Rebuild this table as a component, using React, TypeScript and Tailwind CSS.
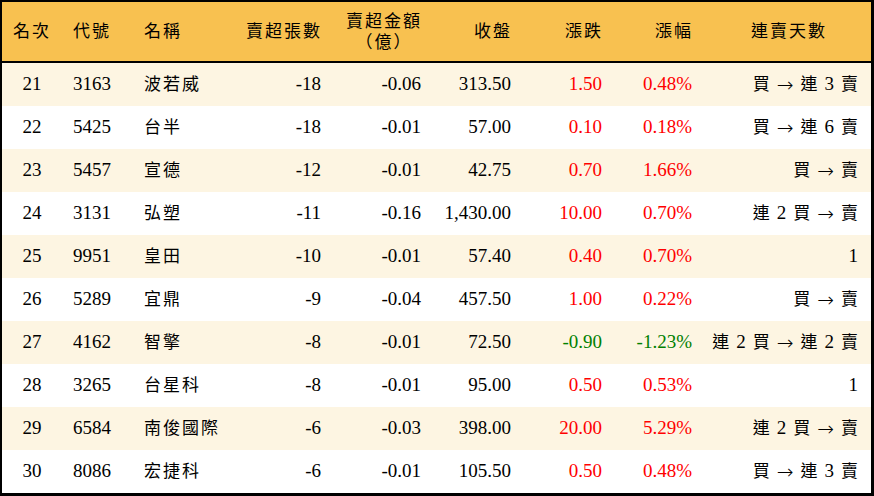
const rows = [
  { rank: "21", code: "3163", name: "波若威", lots: "-18", amount: "-0.06", close: "313.50", change: "1.50", pct: "0.48%", streak: "買 → 連 3 賣" },
  { rank: "22", code: "5425", name: "台半", lots: "-18", amount: "-0.01", close: "57.00", change: "0.10", pct: "0.18%", streak: "買 → 連 6 賣" },
  { rank: "23", code: "5457", name: "宣德", lots: "-12", amount: "-0.01", close: "42.75", change: "0.70", pct: "1.66%", streak: "買 → 賣" },
  { rank: "24", code: "3131", name: "弘塑", lots: "-11", amount: "-0.16", close: "1,430.00", change: "10.00", pct: "0.70%", streak: "連 2 買 → 賣" },
  { rank: "25", code: "9951", name: "皇田", lots: "-10", amount: "-0.01", close: "57.40", change: "0.40", pct: "0.70%", streak: "1" },
  { rank: "26", code: "5289", name: "宜鼎", lots: "-9", amount: "-0.04", close: "457.50", change: "1.00", pct: "0.22%", streak: "買 → 賣" },
  { rank: "27", code: "4162", name: "智擎", lots: "-8", amount: "-0.01", close: "72.50", change: "-0.90", pct: "-1.23%", streak: "連 2 買 → 連 2 賣" },
  { rank: "28", code: "3265", name: "台星科", lots: "-8", amount: "-0.01", close: "95.00", change: "0.50", pct: "0.53%", streak: "1" },
  { rank: "29", code: "6584", name: "南俊國際", lots: "-6", amount: "-0.03", close: "398.00", change: "20.00", pct: "5.29%", streak: "連 2 買 → 賣" },
  { rank: "30", code: "8086", name: "宏捷科", lots: "-6", amount: "-0.01", close: "105.50", change: "0.50", pct: "0.48%", streak: "買 → 連 3 賣" },
]

const font = "font-['Liberation_Serif','Noto_Sans_CJK_TC',serif]"

// digits and the arrow sit a little larger than the CJK glyphs
function Streak({ text }: { text: string }) {
  const parts = text.split(" ")
  return (
    <span className="inline-flex items-center justify-end gap-[7px]">
      {parts.map((p, i) => {
        if (p === "→")
          return (
            <span key={i} className="font-['DejaVu_Sans',sans-serif] text-[20px] font-light leading-none">
              →
            </span>
          )
        if (/^[0-9]+$/.test(p))
          return (
            <span key={i} className="text-[19px]">
              {p}
            </span>
          )
        return (
          <span key={i} className="text-[17px]">
            {p}
          </span>
        )
      })}
    </span>
  )
}

export default function App() {
  return (
    <div className={`${font} h-[496px] w-[874px] border-t-2 border-r-[3px] border-b-[3px] border-l-2 border-black bg-white text-black`}>
      <div className="flex h-[61px] items-center border-b-2 border-black bg-[#f8c150] text-[17px] tracking-[2px]">
        <div className="w-[60px] text-center">名次</div>
        <div className="w-[72px] pl-[11px]">代號</div>
        <div className="w-[100px] pl-[10px]">名稱</div>
        <div className="w-[88px] text-right">賣超張數</div>
        <div className="flex w-[100px] justify-end">
          <div className="text-center leading-[21px]">
            賣超金額
            <br />
            （億）
          </div>
        </div>
        <div className="w-[90px] text-right">收盤</div>
        <div className="w-[91px] text-right">漲跌</div>
        <div className="w-[90px] text-right">漲幅</div>
        <div className="w-[178px] pl-[14px] text-center">連賣天數</div>
      </div>

      {rows.map((row, i) => {
        const color = row.change.startsWith("-") ? "text-[#008000]" : "text-[#ff0000]"
        return (
          <div
            key={row.rank}
            className={`flex h-[43px] items-center text-[19px] ${i % 2 === 0 ? "bg-[#fdf5e2]" : "bg-white"}`}
          >
            <div className="w-[60px] text-center">{row.rank}</div>
            <div className="w-[72px] pl-[11px]">{row.code}</div>
            <div className="w-[100px] pl-[10px] text-[17px] tracking-[2px]">{row.name}</div>
            <div className="w-[88px] pr-[1px] text-right">{row.lots}</div>
            <div className="w-[100px] pr-[1px] text-right">{row.amount}</div>
            <div className="w-[90px] pr-[1px] text-right">{row.close}</div>
            <div className={`w-[91px] pr-[1px] text-right ${color}`}>{row.change}</div>
            <div className={`w-[90px] pr-[1px] text-right ${color}`}>{row.pct}</div>
            <div className="flex w-[178px] justify-end pr-[13px]">
              <Streak text={row.streak} />
            </div>
          </div>
        )
      })}
    </div>
  )
}
